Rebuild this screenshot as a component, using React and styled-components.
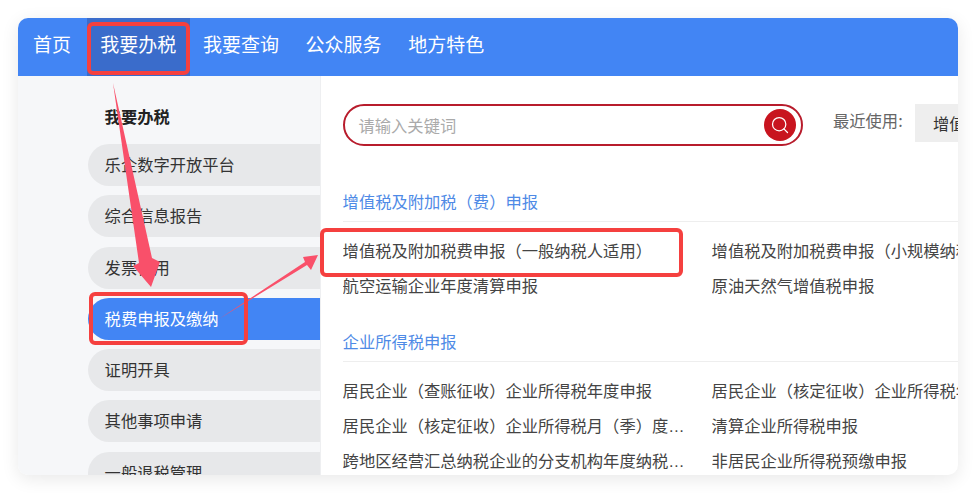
import React from 'react';
import styled, { createGlobalStyle } from 'styled-components';
import { Search } from 'lucide-react';

const Global = createGlobalStyle`
  html, body { margin: 0; padding: 0; background: #fff; overflow: hidden; }
  body { font-family: "Noto Sans CJK SC", "Liberation Sans", sans-serif; }
`;
const Page = styled.div`
  position: relative;
  width: 976px;
  height: 493px;
  padding: 18px;
  box-sizing: border-box;
`;
const Card = styled.div`
  width: 940px;
  height: 457px;
  border-radius: 10px;
  overflow: hidden;
  background: #fff;
  box-shadow: 0 4px 18px rgba(0, 0, 0, 0.09);
  display: flex;
  flex-direction: column;
`;
const Nav = styled.nav`
  height: 58px;
  flex: none;
  background: #4285f4;
  display: flex;
  padding-left: 1px;
`;
const NavItem = styled.div`
  padding: 0 ${p => (p.$first ? '14px 0 14px' : '13.3px')};
  margin-right: ${p => (p.$first ? '2px' : '0')};
  line-height: 51px;
  font-size: 19px;
  color: #fff;
  background: ${p => (p.$active ? '#3a6ccb' : 'transparent')};
`;
const Body = styled.div`
  flex: 1;
  min-height: 0;
  display: flex;
`;
const Side = styled.aside`
  width: 303px;
  flex: none;
  box-sizing: border-box;
  background: #f6f7f9;
  border-right: 1px solid #eeeff1;
  padding: 28px 0 0 70px;
  overflow: hidden;
`;
const SideTitle = styled.div`
  font-size: 16.3px;
  font-weight: 700;
  color: #222;
  line-height: 24px;
  padding-left: 16.6px;
  margin-bottom: 16px;
`;
const Pill = styled.div`
  height: 42px;
  line-height: 41px;
  margin-bottom: 9.3px;
  padding-left: 16.6px;
  font-size: 16.3px;
  border-radius: 21px 0 0 21px;
  color: ${p => (p.$active ? '#fff' : '#333')};
  background: ${p => (p.$active ? '#4285f4' : '#e7e8ea')};
`;
const Main = styled.main`
  flex: 1;
  min-width: 0;
  padding: 28px 0 0 22px;
  overflow: hidden;
`;
const SearchRow = styled.div`
  display: flex;
  align-items: flex-start;
  margin-bottom: 43.3px;
`;
const SearchBox = styled.div`
  width: 460px;
  height: 42px;
  flex: none;
  box-sizing: border-box;
  border: 2px solid #b81c2c;
  border-radius: 21px;
  display: flex;
  align-items: center;
  justify-content: space-between;
  padding: 0 5px 0 13.5px;
  font-size: 16.3px;
  line-height: 36px;
  color: #aaa;
`;
const SearchBtn = styled.div`
  width: 32px;
  height: 32px;
  border-radius: 50%;
  background: #c8141f;
  display: flex;
  align-items: center;
  justify-content: center;
`;
const RecentLabel = styled.div`
  margin-left: 30px;
  width: 82px;
  flex: none;
  font-size: 16.3px;
  color: #666;
  line-height: 33px;
  white-space: nowrap;
`;
const RecentTag = styled.div`
  flex: none;
  height: 38px;
  line-height: 38px;
  padding: 0 19px 0 18px;
  background: #eeeeee;
  font-size: 16.3px;
  color: #333;
  white-space: nowrap;
`;
const Group = styled.section`
  margin: 0 0 31.3px -0.4px;
`;
const GroupTitle = styled.div`
  font-size: 16.3px;
  line-height: 24px;
  color: #4e8ae6;
  padding-bottom: 8px;
  border-bottom: 1px solid #eeeeee;
  margin-bottom: 16.5px;
`;
const Links = styled.div`
  display: grid;
  grid-template-columns: 343px 343px;
  column-gap: 26px;
  row-gap: 11px;
`;
const LinkItem = styled.div`
  font-family: "Liberation Sans", "Noto Sans CJK SC", sans-serif;
  font-size: 16.3px;
  line-height: 24px;
  color: #444;
  white-space: nowrap;
  overflow: ${p => (p.$clip ? 'visible' : 'hidden')};
  text-overflow: ${p => (p.$clip ? 'clip' : 'ellipsis')};
`;
const Overlay = styled.svg`
  position: absolute;
  left: 0;
  top: 0;
  width: 976px;
  height: 493px;
  pointer-events: none;
`;

const sideItems = ['乐企数字开放平台', '综合信息报告', '发票使用', '税费申报及缴纳', '证明开具', '其他事项申请', '一般退税管理'];
const group1 = [
  ['增值税及附加税费申报（一般纳税人适用）'],
  ['增值税及附加税费申报（小规模纳税人适用）', true],
  ['航空运输企业年度清算申报'],
  ['原油天然气增值税申报'],
];
const group2 = [
  ['居民企业（查账征收）企业所得税年度申报'],
  ['居民企业（核定征收）企业所得税年度申报', true],
  ['居民企业（核定征收）企业所得税月（季）度预缴申报'],
  ['清算企业所得税申报'],
  ['跨地区经营汇总纳税企业的分支机构年度纳税申报'],
  ['非居民企业所得税预缴申报'],
];

export default function App() {
  return (
    <Page>
      <Global />
      <Card>
        <Nav>
          {['首页', '我要办税', '我要查询', '公众服务', '地方特色'].map((n, i) => (
            <NavItem key={n} $active={i === 1} $first={i === 0}>{n}</NavItem>
          ))}
        </Nav>
        <Body>
          <Side>
            <SideTitle>我要办税</SideTitle>
            {sideItems.map((s, i) => (
              <Pill key={s} $active={i === 3}>{s}</Pill>
            ))}
          </Side>
          <Main>
            <SearchRow>
              <SearchBox>
                <span>请输入关键词</span>
                <SearchBtn><Search size={20} color="#fff" strokeWidth={1.5} /></SearchBtn>
              </SearchBox>
              <RecentLabel>最近使用:</RecentLabel>
              <RecentTag>增值税及附加税费申报</RecentTag>
            </SearchRow>
            <Group>
              <GroupTitle>增值税及附加税（费）申报</GroupTitle>
              <Links>{group1.map(([t, c]) => <LinkItem key={t} $clip={c}>{t}</LinkItem>)}</Links>
            </Group>
            <Group>
              <GroupTitle>企业所得税申报</GroupTitle>
              <Links>{group2.map(([t, c]) => <LinkItem key={t} $clip={c}>{t}</LinkItem>)}</Links>
            </Group>
          </Main>
        </Body>
      </Card>
      <Overlay viewBox="0 0 976 493">
        <polygon points="113,83 152,258 160,262 151,287 133,266 139,263" fill="#f9506a" />
        <polygon points="219,319 305,262 303,257 318,255 311,270 307,265" fill="#f9506a" />
        <rect x="89" y="24" width="99" height="49" rx="4" fill="none" stroke="#f5403f" strokeWidth="4" />
        <rect x="91" y="294" width="155" height="49" rx="4" fill="none" stroke="#f5403f" strokeWidth="4" />
        <rect x="322" y="230" width="359" height="45" rx="4" fill="none" stroke="#f5403f" strokeWidth="4" />
      </Overlay>
    </Page>
  );
}
